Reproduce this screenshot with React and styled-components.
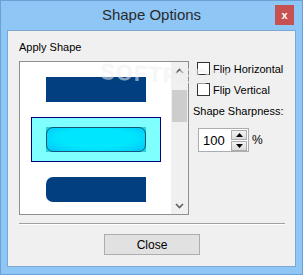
import React from 'react'
import styled, { createGlobalStyle } from 'styled-components'

const Global = createGlobalStyle`
  html, body { margin: 0; padding: 0; background: #fff; }
  * { box-sizing: border-box; }
  body { font-family: "Liberation Sans", Arial, sans-serif; }
`

const Window = styled.div`
  position: relative;
  width: 303px;
  height: 275px;
  background: #8ec6f6;
  border: 1px solid #6c9fd6;
  display: flex;
  flex-direction: column;
  overflow: hidden;
`

const TitleBar = styled.div`
  position: relative;
  height: 29px;
  display: flex;
  align-items: center;
  justify-content: center;
  font-size: 15px;
  color: #2a2a2a;
  padding-bottom: 2px;
`

const CloseX = styled.div`
  position: absolute;
  right: 8px;
  top: 4px;
  width: 19px;
  height: 20px;
  background: #c75050;
  color: #fff;
  font-weight: bold;
  font-size: 11px;
  display: flex;
  align-items: center;
  justify-content: center;
`

const Client = styled.div`
  margin: 0 6px 7px 6px;
  flex: 1;
  background: #f0f0f0;
  border: 1px solid #7ea7d3;
  display: flex;
  flex-direction: column;
`

const MainRow = styled.div`
  display: flex;
  padding: 10px 10px 0 11px;
`

const LeftCol = styled.div`
  width: 170px;
  display: flex;
  flex-direction: column;
`

const Label = styled.div`
  font-size: 11px;
  line-height: 13px;
  color: #000;
  margin-bottom: ${(p) => p.mb || 0}px;
  margin-top: ${(p) => p.mt || 0}px;
`

const ListBox = styled.div`
  height: 154px;
  background: #fff;
  border: 1px solid #8e8f8f;
  display: flex;
`

const ListItems = styled.div`
  flex: 1;
  display: flex;
  flex-direction: column;
  align-items: center;
  overflow: hidden;
`

const Item = styled.div`
  width: 130px;
  height: 45px;
  margin-top: 5px;
  flex-shrink: 0;
  display: flex;
  align-items: center;
  justify-content: center;
  background: ${(p) => (p.selected ? '#80ffff' : 'transparent')};
  border: 1px solid ${(p) => (p.selected ? '#000080' : 'transparent')};
`

const ShapeBack = styled.div`
  width: 100px;
  height: 25px;
  background: ${(p) => (p.selected ? '#22d2d6' : 'transparent')};
`

const Shape = styled.div`
  width: 100px;
  height: 25px;
  background: ${(p) => p.bg};
  border-radius: ${(p) => p.radius};
  border: ${(p) => p.border || 'none'};
`

const ScrollBar = styled.div`
  width: 17px;
  background: #f0f0f0;
  display: flex;
  flex-direction: column;
`

const ScrollArrow = styled.div`
  height: 17px;
  display: flex;
  align-items: center;
  justify-content: center;
`

const Track = styled.div`
  flex: 1;
  padding: 11px 1px 0 1px;
`

const Thumb = styled.div`
  height: 32px;
  background: #cdcdcd;
`

const RightCol = styled.div`
  margin-left: 4px;
  padding-top: 21px;
  display: flex;
  flex-direction: column;
`

const CheckRow = styled.label`
  display: flex;
  align-items: center;
  margin-left: 4px;
  margin-bottom: 8px;
  font-size: 11px;
  color: #000;
  height: 13px;
`

const Box = styled.span`
  width: 13px;
  height: 13px;
  border: 1px solid #333;
  background: #fff;
  margin-right: 3px;
`

const SpinRow = styled.div`
  display: flex;
  align-items: center;
  margin-left: 5px;
  margin-top: 10px;
`

const SpinInput = styled.div`
  width: 51px;
  height: 24px;
  background: #fff;
  border: 1px solid #abadb3;
  display: flex;
  align-items: center;
  justify-content: space-between;
  padding: 0 1px 0 4px;
  font-size: 13px;
  color: #000;
`

const SpinButtons = styled.div`
  display: flex;
  flex-direction: column;
  gap: 1px;
`

const SpinBtn = styled.div`
  width: 16px;
  height: 10px;
  background: linear-gradient(#f2f2f2, #dcdcdc);
  border: 1px solid #acacac;
  display: flex;
  align-items: center;
  justify-content: center;
`

const Percent = styled.span`
  font-size: 12px;
  margin-left: 3px;
  color: #000;
`

const Separator = styled.div`
  margin: 8px 10px 0 11px;
  height: 2px;
  border-top: 1px solid #a0a0a0;
  border-bottom: 1px solid #fff;
`

const Footer = styled.div`
  display: flex;
  justify-content: center;
  padding-top: 9px;
  padding-left: 1px;
`

const Button = styled.div`
  width: 96px;
  height: 21px;
  border: 1px solid #adadad;
  background: #e1e1e1;
  display: flex;
  align-items: center;
  justify-content: center;
  font-size: 12px;
  color: #000;
`

const Watermark = styled.div`
  position: absolute;
  left: 100px;
  top: 58px;
  font-size: 22px;
  font-weight: bold;
  letter-spacing: 1px;
  color: rgba(255, 255, 255, 0.55);
  text-shadow: 0 0 1px rgba(0, 0, 0, 0.08);
  pointer-events: none;
  transform: rotate(3deg);
  transform-origin: left top;
`

const Chevron = ({ up }) => (
  <svg width="9" height="6" viewBox="0 0 9 6">
    <polyline
      points={up ? '1,5 4.5,1.5 8,5' : '1,1 4.5,4.5 8,1'}
      fill="none"
      stroke="#606060"
      strokeWidth="1.6"
    />
  </svg>
)

const Tri = ({ up }) => (
  <svg width="7" height="4" viewBox="0 0 7 4">
    <polygon points={up ? '0,4 3.5,0 7,4' : '0,0 3.5,4 7,0'} fill="#000" />
  </svg>
)

const App = () => (
  <>
    <Global />
    <Window>
      <TitleBar>
        Shape Options
        <CloseX>x</CloseX>
      </TitleBar>
      <Client>
        <MainRow>
          <LeftCol>
            <Label mb={7}>Apply Shape</Label>
            <ListBox>
              <ListItems>
                <Item>
                  <Shape bg="#023f80" radius="0" />
                </Item>
                <Item selected>
                  <ShapeBack selected>
                    <Shape
                      bg="radial-gradient(ellipse at 50% 45%, #00e6ff 55%, #00c4f4 100%)"
                      radius="7px"
                      border="1px solid #17557a"
                    />
                  </ShapeBack>
                </Item>
                <Item>
                  <Shape bg="#023f80" radius="7px 0 0 7px" />
                </Item>
              </ListItems>
              <ScrollBar>
                <ScrollArrow>
                  <Chevron up />
                </ScrollArrow>
                <Track>
                  <Thumb />
                </Track>
                <ScrollArrow>
                  <Chevron />
                </ScrollArrow>
              </ScrollBar>
            </ListBox>
          </LeftCol>
          <RightCol>
            <CheckRow>
              <Box />
              Flip Horizontal
            </CheckRow>
            <CheckRow>
              <Box />
              Flip Vertical
            </CheckRow>
            <Label mt={1}>Shape Sharpness:</Label>
            <SpinRow>
              <SpinInput>
                100
                <SpinButtons>
                  <SpinBtn>
                    <Tri up />
                  </SpinBtn>
                  <SpinBtn>
                    <Tri />
                  </SpinBtn>
                </SpinButtons>
              </SpinInput>
              <Percent>%</Percent>
            </SpinRow>
          </RightCol>
        </MainRow>
        <Separator />
        <Footer>
          <Button>Close</Button>
        </Footer>
      </Client>
      <Watermark>SOFTPEDIA</Watermark>
    </Window>
  </>
)

export default App
